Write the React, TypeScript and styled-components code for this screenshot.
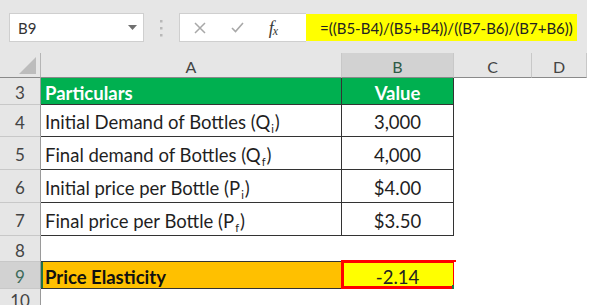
import React from "react";
import styled, { createGlobalStyle, css } from "styled-components";

const Global = createGlobalStyle`
  html, body { margin: 0; padding: 0; background: #ffffff; }
  body { font-family: Lato, "Open Sans", sans-serif; }
`;

const Sheet = styled.div`
  width: 587px;
  height: 305px;
  overflow: hidden;
  background: #ffffff;
`;

const TopBar = styled.div`
  height: 53px;
  background: #e6e6e6;
  display: flex;
  align-items: flex-start;
  padding: 13px 0 0 9px;
  box-sizing: border-box;
`;

const NameBox = styled.div`
  width: 135px;
  height: 29px;
  box-sizing: border-box;
  background: #ffffff;
  border: 1px solid #cfcfcf;
  display: flex;
  align-items: center;
  justify-content: space-between;
  padding: 0 6px 0 8px;
  font-family: Lato, sans-serif;
  font-size: 15px;
  color: #333;
`;

const Separator = styled.div`
  width: 35px;
  height: 29px;
  display: flex;
  align-items: center;
  justify-content: center;
`;

const FormulaBox = styled.div`
  width: 127px;
  height: 29px;
  box-sizing: border-box;
  background: #ffffff;
  border: 1px solid #cfcfcf;
  border-right: none;
  display: flex;
  align-items: center;
  padding-left: 14px;
`;

const IconSlot = styled.div`
  width: 39px;
  display: flex;
  align-items: center;
  justify-content: flex-start;
`;

const Fx = styled.span`
  font-family: "Liberation Serif", serif;
  font-style: italic;
  font-size: 18px;
  color: #3a3a3a;
  letter-spacing: -1px;
  line-height: 1;
  sub {
    font-size: 12px;
    vertical-align: -1px;
  }
`;

const FormulaText = styled.div`
  width: 271px;
  height: 27px;
  margin-top: 1px;
  background: #ffff00;
  display: flex;
  align-items: center;
  padding-left: 14px;
  box-sizing: border-box;
  font-family: Lato, sans-serif;
  font-size: 15px;
  color: #222;
  white-space: nowrap;
`;

const Grid = styled.div`
  display: grid;
  grid-template-columns: 41px 301px 112px 78px 55px;
  grid-template-rows: 25px 27px 32px 33px 33px 33px 26px 27px 20px;
`;

type Tone = "plain" | "green" | "orange" | "result" | "blank";

const ColHead = styled.div<{ $selected?: boolean }>`
  background: ${(p) => (p.$selected ? "#d2d2d2" : "#e6e6e6")};
  border-right: 1px solid #c8c8c8;
  border-bottom: 1px solid #8a8a8a;
  display: flex;
  align-items: center;
  justify-content: center;
  font-family: Lato, sans-serif;
  font-size: 16px;
  color: ${(p) => (p.$selected ? "#2e5b46" : "#444")};
  box-sizing: border-box;
  padding-top: 2px;
`;

const Corner = styled.div`
  background: #e6e6e6;
  border-right: 1px solid #b5b5b5;
  border-bottom: 1px solid #8a8a8a;
  box-sizing: border-box;
  display: flex;
  align-items: flex-end;
  justify-content: flex-end;
  padding: 0 4px 3px 0;
`;

const RowHead = styled.div<{ $selected?: boolean }>`
  background: ${(p) => (p.$selected ? "#d2d2d2" : "#e6e6e6")};
  border-right: 1px solid #9a9a9a;
  border-bottom: 1px solid #c8c8c8;
  box-sizing: border-box;
  display: flex;
  align-items: center;
  justify-content: center;
  font-family: Lato, sans-serif;
  font-size: 17px;
  color: ${(p) => (p.$selected ? "#3d6b5a" : "#444")};
  padding-top: 3px;
`;

const toneStyles: Record<Tone, ReturnType<typeof css>> = {
  plain: css`
    background: #ffffff;
    color: #1f1f1f;
  `,
  green: css`
    background: #00b050;
    color: #ffffff;
    font-weight: 700;
  `,
  orange: css`
    background: #ffc000;
    color: #111;
    font-weight: 700;
  `,
  result: css`
    background: #ffff00;
    color: #222;
  `,
  blank: css`
    background: #ffffff;
  `,
};

const Cell = styled.div<{
  $tone: Tone;
  $center?: boolean;
  $framed?: boolean;
  $underline?: boolean;
  $selLeft?: boolean;
}>`
  position: relative;
  box-sizing: border-box;
  display: flex;
  align-items: center;
  justify-content: ${(p) => (p.$center ? "center" : "flex-start")};
  padding: 3px 0 0 ${(p) => (p.$center ? "0" : "4px")};
  font-family: Lato, sans-serif;
  font-size: 18.5px;
  white-space: nowrap;
  ${(p) => toneStyles[p.$tone]}
  ${(p) =>
    p.$framed &&
    css`
      border-bottom: 1px solid #333;
      border-right: 1px solid #333;
    `}
  ${(p) =>
    p.$underline &&
    css`
      border-bottom: 1px solid #333;
    `}
  ${(p) =>
    p.$selLeft &&
    css`
      box-shadow: inset 2px 0 0 #217346;
    `}
`;

const SelectionFrame = styled.div`
  position: absolute;
  left: -1px;
  top: -2px;
  right: -3px;
  bottom: -1px;
  border: 3px solid #ff0000;
  pointer-events: none;
  &::after {
    content: "";
    position: absolute;
    right: -3px;
    bottom: -3px;
    width: 4px;
    height: 4px;
    background: #217346;
  }
`;

const Label = styled.span`
  display: inline-block;
`;

const Sub = styled.sub`
  font-size: 11px;
  line-height: 0;
  vertical-align: -4px;
  margin: 0 1px;
`;

const rows: { n: number; label: React.ReactNode; value: string }[] = [
  { n: 4, label: <>Initial Demand of Bottles (Q<Sub>i</Sub>)</>, value: "3,000" },
  { n: 5, label: <>Final demand of Bottles (Q<Sub>f</Sub>)</>, value: "4,000" },
  { n: 6, label: <>Initial price per Bottle (P<Sub>i</Sub>)</>, value: "$4.00" },
  { n: 7, label: <>Final price per Bottle (P<Sub>f</Sub>)</>, value: "$3.50" },
];

export default function App() {
  return (
    <Sheet>
      <Global />
      <TopBar>
        <NameBox>
          <span>B9</span>
          <svg width="9" height="5" viewBox="0 0 9 5">
            <path d="M0 0 H9 L4.5 5 Z" fill="#6f6f6f" />
          </svg>
        </NameBox>
        <Separator>
          <svg width="3" height="18" viewBox="0 0 3 18">
            <rect x="0" y="1" width="2.5" height="2.5" fill="#b8b8b8" />
            <rect x="0" y="8" width="2.5" height="2.5" fill="#b8b8b8" />
            <rect x="0" y="15" width="2.5" height="2.5" fill="#b8b8b8" />
          </svg>
        </Separator>
        <FormulaBox>
          <IconSlot>
            <svg width="12" height="12" viewBox="0 0 12 12">
              <path d="M1 1 L11 11 M11 1 L1 11" stroke="#a8a8a8" strokeWidth="1.5" />
            </svg>
          </IconSlot>
          <IconSlot>
            <svg width="13" height="11" viewBox="0 0 13 11">
              <path d="M1 6 L4.5 9.5 L12 1" stroke="#a8a8a8" strokeWidth="1.6" fill="none" />
            </svg>
          </IconSlot>
          <IconSlot>
            <Fx>
              f<sub>x</sub>
            </Fx>
          </IconSlot>
        </FormulaBox>
        <FormulaText>=((B5-B4)/(B5+B4))/((B7-B6)/(B7+B6))</FormulaText>
      </TopBar>
      <Grid>
        <Corner>
          <svg width="17" height="17" viewBox="0 0 17 17">
            <path d="M17 0 V17 H0 Z" fill="#bcbcbc" />
          </svg>
        </Corner>
        <ColHead>A</ColHead>
        <ColHead $selected>B</ColHead>
        <ColHead>C</ColHead>
        <ColHead>D</ColHead>

        <RowHead>3</RowHead>
        <Cell $tone="green" $framed>Particulars</Cell>
        <Cell $tone="green" $framed $center>Value</Cell>
        <Cell $tone="blank" />
        <Cell $tone="blank" />

        {rows.map((r) => (
          <React.Fragment key={r.n}>
            <RowHead>{r.n}</RowHead>
            <Cell $tone="plain" $framed>
              <Label>{r.label}</Label>
            </Cell>
            <Cell $tone="plain" $framed $center>{r.value}</Cell>
            <Cell $tone="blank" />
            <Cell $tone="blank" />
          </React.Fragment>
        ))}

        <RowHead>8</RowHead>
        <Cell $tone="blank" $underline />
        <Cell $tone="blank" $underline />
        <Cell $tone="blank" />
        <Cell $tone="blank" />

        <RowHead $selected>9</RowHead>
        <Cell $tone="orange" $framed $selLeft>Price Elasticity</Cell>
        <Cell $tone="result" $framed $center>
          -2.14
          <SelectionFrame />
        </Cell>
        <Cell $tone="blank" />
        <Cell $tone="blank" />

        <RowHead>10</RowHead>
        <Cell $tone="blank" />
        <Cell $tone="blank" />
        <Cell $tone="blank" />
        <Cell $tone="blank" />
      </Grid>
    </Sheet>
  );
}
